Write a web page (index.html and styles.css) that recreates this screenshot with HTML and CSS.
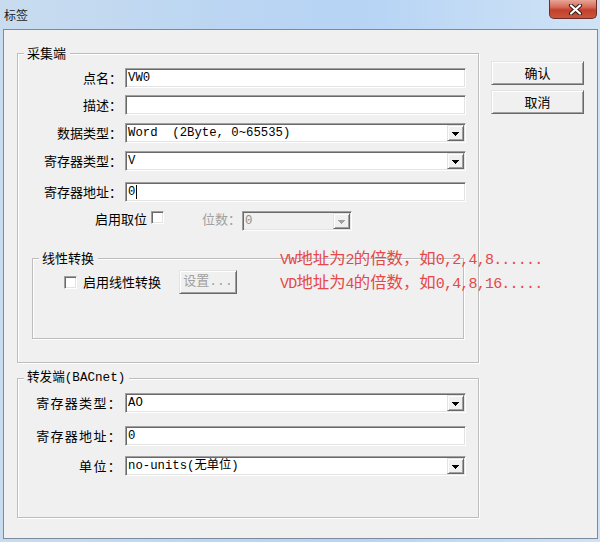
FILE: index.html
```html
<!DOCTYPE html>
<html lang="zh-CN">
<head>
<meta charset="utf-8">
<title>标签</title>
<link rel="stylesheet" href="styles.css">
</head>
<body>
<div class="window">
  <div class="titlebar">
    <span class="title">标签</span>
    <div class="close">
      <svg width="15" height="11" viewBox="0 0 15 11"><path d="M3 1.5L12 9.5M12 1.5L3 9.5" stroke="#3b1c17" stroke-width="4.2" stroke-linecap="round"/><path d="M3 1.5L12 9.5M12 1.5L3 9.5" stroke="#fff" stroke-width="2.2" stroke-linecap="round"/></svg>
    </div>
  </div>
  <div class="client">
    <div class="main">
      <fieldset class="group g1">
        <legend>采集端</legend>
        <div class="row">
          <span class="lbl">点名：</span>
          <div class="field">VW0</div>
        </div>
        <div class="row r2">
          <span class="lbl">描述：</span>
          <div class="field"></div>
        </div>
        <div class="row r3">
          <span class="lbl">数据类型：</span>
          <div class="field combo"><span class="val">Word  (2Byte, 0~65535)</span><span class="drop"><svg width="7" height="4" viewBox="0 0 7 4"><path d="M0 0H7V1H6V2H5V3H4V4H3V3H2V2H1V1H0Z" fill="#000"/></svg></span></div>
        </div>
        <div class="row r4">
          <span class="lbl">寄存器类型：</span>
          <div class="field combo"><span class="val">V</span><span class="drop"><svg width="7" height="4" viewBox="0 0 7 4"><path d="M0 0H7V1H6V2H5V3H4V4H3V3H2V2H1V1H0Z" fill="#000"/></svg></span></div>
        </div>
        <div class="row r5">
          <span class="lbl">寄存器地址：</span>
          <div class="field">0<span class="caret"></span></div>
        </div>
        <div class="bitrow">
          <span class="lbl bitlbl">启用取位</span>
          <span class="check"></span>
          <span class="muted">位数：</span>
          <div class="field combo disabled bitcombo"><span class="val">0</span><span class="drop"><svg width="7" height="4" viewBox="0 0 7 4"><path d="M0 0H7V1H6V2H5V3H4V4H3V3H2V2H1V1H0Z" fill="#a0a0a0"/></svg></span></div>
        </div>
        <fieldset class="group g3">
          <legend>线性转换</legend>
          <div class="linrow">
            <span class="check"></span>
            <span class="checklbl">启用线性转换</span>
            <div class="btn setbtn">设置...</div>
          </div>
        </fieldset>
      </fieldset>
      <fieldset class="group g2">
        <legend class="mono">转发端(BACnet)</legend>
        <div class="row">
          <span class="lbl wide">寄存器类型：</span>
          <div class="field combo"><span class="val">AO</span><span class="drop"><svg width="7" height="4" viewBox="0 0 7 4"><path d="M0 0H7V1H6V2H5V3H4V4H3V3H2V2H1V1H0Z" fill="#000"/></svg></span></div>
        </div>
        <div class="row s2">
          <span class="lbl wide">寄存器地址：</span>
          <div class="field">0</div>
        </div>
        <div class="row s3">
          <span class="lbl wide">单位：</span>
          <div class="field combo"><span class="val">no-units(无单位)</span><span class="drop"><svg width="7" height="4" viewBox="0 0 7 4"><path d="M0 0H7V1H6V2H5V3H4V4H3V3H2V2H1V1H0Z" fill="#000"/></svg></span></div>
        </div>
      </fieldset>
    </div>
    <div class="buttons">
      <div class="btn dlgbtn">确认</div>
      <div class="btn dlgbtn">取消</div>
    </div>
    <div class="note">
      <div><span class="asc">VW</span>地址为<span class="asc">2</span>的倍数，如<span class="asc">0,2,4,8......</span></div>
      <div><span class="asc">VD</span>地址为<span class="asc">4</span>的倍数，如<span class="asc">0,4,8,16.....</span></div>
    </div>
  </div>
</div>
</body>
</html>
```

FILE: styles.css
```css
* { box-sizing: border-box; }
html, body { margin: 0; padding: 0; }
body {
  width: 600px;
  height: 542px;
  overflow: hidden;
  background: #c5d9ee;
  font-family: "Noto Sans CJK SC", sans-serif;
  font-size: 13px;
  color: #000;
}
.window {
  width: 600px;
  height: 542px;
  display: flex;
  flex-direction: column;
  background: linear-gradient(to right, #c9dcef 0%, #bcd6f2 35%, #b7d4f5 60%, #c6ddf5 85%, #d0e3f6 100%);
}
.titlebar {
  height: 29px;
  flex: none;
  display: flex;
  justify-content: space-between;
  align-items: flex-start;
  padding: 0 3px 0 4px;
}
.title {
  font-size: 12px;
  line-height: 16px;
  margin-top: 7px;
  color: #1b1b1b;
}
.close {
  width: 48px;
  height: 19px;
  border: 1px solid #6a2e26;
  border-top: none;
  border-radius: 0 0 5px 5px;
  background: linear-gradient(#e7a596 0%, #d76b58 40%, #c2412b 55%, #c9553f 100%);
  display: flex;
  align-items: center;
  justify-content: center;
  padding-left: 4px;
}
.client {
  position: relative;
  flex: 1;
  margin: 0 2px 3px 3px;
  border: 1px solid #7b8b9d;
  background: #f0f0f0;
  display: flex;
  align-items: flex-start;
  padding-left: 13px;
}
.main {
  width: 462px;
  padding-top: 15px;
}
.group {
  margin: 0;
  padding: 0;
  min-width: 0;
  border: 1px solid #bdbdbd;
  box-shadow: inset 1px 1px 0 #fff, 1px 1px 0 #fff;
}
.group > legend {
  padding: 0 4px 0 3px;
  margin-left: 6px;
  line-height: 16px;
  background: #f0f0f0;
}
.group > legend.mono {
  font-family: "Liberation Mono", "Noto Sans CJK SC", monospace;
  font-size: 12.6px;
}
.group.g1 {
  width: 462px;
  padding: 7px 0 23px 0;
}
.group.g2 {
  width: 462px;
  margin-top: 7px;
  padding: 7px 0 41px 0;
}
.group.g3 {
  width: 432px;
  margin: 19px 0 0 14px;
  padding: 4px 0 44px 0;
}
.row {
  display: flex;
  align-items: center;
  height: 20px;
}
.r2 { margin-top: 7px; }
.r3 { margin-top: 8px; }
.r4 { margin-top: 8px; }
.r5 { margin-top: 11px; }
.s2 { margin-top: 13px; }
.s3 { margin-top: 10px; }
.lbl {
  width: 104px;
  margin-right: 3px;
  text-align: right;
  line-height: 16px;
  white-space: nowrap;
}
.lbl.wide {
  letter-spacing: 1.3px;
}
.field {
  width: 341px;
  height: 20px;
  display: flex;
  align-items: center;
  padding-left: 2px;
  background: #fff;
  border: 1px solid;
  border-color: #a0a0a0 #fff #fff #a0a0a0;
  box-shadow: inset 1px 1px 0 #696969, inset -1px -1px 0 #e3e3e3;
  font-family: "Liberation Mono", "Noto Sans CJK SC", monospace;
  font-size: 12.3px;
  line-height: 16px;
  white-space: pre;
}
.combo {
  justify-content: space-between;
}
.drop {
  width: 17px;
  height: 16px;
  margin-right: 1px;
  display: flex;
  align-items: center;
  justify-content: center;
  padding-top: 1px;
  background: #f0f0f0;
  border: 1px solid;
  border-color: #e3e3e3 #696969 #696969 #e3e3e3;
  box-shadow: inset 1px 1px 0 #fff, inset -1px -1px 0 #a0a0a0;
}
.drop svg { display: block; }
.caret {
  display: inline-block;
  width: 1px;
  height: 14px;
  margin-left: 1px;
  background: #000;
}
.bitrow {
  display: flex;
  align-items: flex-start;
  height: 20px;
  margin-top: 9px;
}
.lbl.bitlbl {
  width: 129px;
  margin-right: 4px;
  line-height: 15px;
}
.check {
  width: 13px;
  height: 13px;
  flex: none;
  background: #fff;
  border: 1px solid;
  border-color: #a0a0a0 #fff #fff #a0a0a0;
  box-shadow: inset 1px 1px 0 #696969, inset -1px -1px 0 #e3e3e3;
}
.muted {
  color: #a0a0a0;
  margin-left: 38px;
  margin-right: 1px;
  line-height: 15px;
}
.field.disabled {
  background: #f0f0f0;
  color: #8d8d8d;
}
.field.bitcombo {
  width: 110px;
}
.linrow {
  display: flex;
  align-items: center;
  height: 24px;
  padding-left: 31px;
}
.checklbl {
  margin-left: 6px;
  margin-right: 18px;
  line-height: 16px;
}
.btn {
  display: flex;
  align-items: center;
  justify-content: center;
  background: #f0f0f0;
  border: 1px solid;
  border-color: #e3e3e3 #696969 #696969 #e3e3e3;
  box-shadow: inset 1px 1px 0 #fff, inset -1px -1px 0 #a0a0a0;
  line-height: 16px;
}
.setbtn {
  width: 58px;
  height: 24px;
  color: #a0a0a0;
  font-family: "Liberation Mono", "Noto Sans CJK SC", monospace;
  font-size: 13px;
}
.buttons {
  display: flex;
  flex-direction: column;
  gap: 5px;
  margin: 31px 0 0 12px;
}
.dlgbtn {
  width: 93px;
  height: 24px;
}
.note {
  position: absolute;
  left: 276px;
  top: 217px;
  color: #e64848;
  font-size: 16.4px;
  line-height: 20px;
  white-space: nowrap;
}
.note .asc {
  font-family: "Liberation Mono", monospace;
  font-size: 15px;
  letter-spacing: -0.8px;
}
```
